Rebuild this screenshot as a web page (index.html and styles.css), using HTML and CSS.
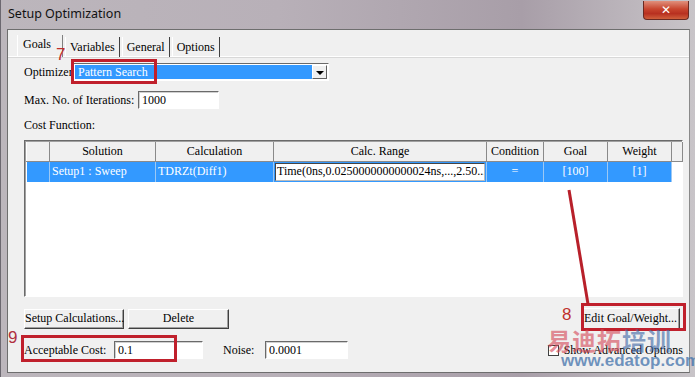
FILE: index.html
```html
<!DOCTYPE html>
<html lang="en">
<head>
    <meta charset="UTF-8">
    <title>Setup Optimization</title>
    <link rel="stylesheet" href="styles.css">
</head>
<body>

    <div class="window">
        <!-- Title bar -->
        <div class="titlebar">
            <span class="title">Setup Optimization</span>
            <div class="close-btn">&#x2715;</div>
        </div>

        <div class="frame">
            <div class="panel">
                <!-- Tabs -->
                <div class="tabs">
                    <div class="tab active">Goals</div>
                    <div class="tab">Variables</div>
                    <div class="tab">General</div>
                    <div class="tab">Options</div>
                </div>

                <div class="page">
                    <div class="row optimizer-row">
                        <label class="lbl-opt">Optimizer</label>
                        <div class="combo">
                            <div class="combo-value">Pattern Search</div>
                            <div class="combo-arrow"></div>
                        </div>
                    </div>

                    <div class="row iter-row">
                        <label class="lbl-iter">Max. No. of Iterations:</label>
                        <div class="input iter-input">1000</div>
                    </div>

                    <div class="section-label">Cost Function:</div>

                    <!-- Cost function grid -->
                    <div class="grid">
                        <table>
                            <colgroup>
                                <col style="width:23px">
                                <col style="width:106px">
                                <col style="width:118px">
                                <col style="width:213px">
                                <col style="width:57px">
                                <col style="width:64px">
                                <col style="width:64px">
                                <col>
                            </colgroup>
                            <tr class="head">
                                <th></th>
                                <th>Solution</th>
                                <th>Calculation</th>
                                <th>Calc. Range</th>
                                <th>Condition</th>
                                <th>Goal</th>
                                <th>Weight</th>
                                <th></th>
                            </tr>
                            <tr class="sel">
                                <td></td>
                                <td class="left">Setup1 : Sweep</td>
                                <td class="left">TDRZt(Diff1)</td>
                                <td class="edit-cell"><div class="cell-edit">Time(0ns,0.0250000000000024ns,...,2.50...</div></td>
                                <td>=</td>
                                <td>[100]</td>
                                <td>[1]</td>
                                <td class="blank"></td>
                            </tr>
                        </table>
                    </div>

                    <div class="row btn-row">
                        <div class="btn btn-setup">Setup Calculations...</div>
                        <div class="btn btn-delete">Delete</div>
                        <div class="btn btn-edit">Edit Goal/Weight...</div>
                    </div>

                    <div class="row cost-row">
                        <label class="lbl-cost">Acceptable Cost:</label>
                        <div class="input cost-input">0.1</div>
                        <label class="lbl-noise">Noise:</label>
                        <div class="input noise-input">0.0001</div>
                        <div class="check">
                            <span class="box"></span>
                            <span>Show Advanced Options</span>
                        </div>
                    </div>
                </div>
            </div>
        </div>

        <!-- Red annotations drawn over the screenshot -->
        <div class="mark mark-7"></div>
        <div class="num num-7">7</div>
        <div class="mark mark-8"></div>
        <div class="num num-8">8</div>
        <div class="mark mark-9"></div>
        <div class="num num-9">9</div>
        <svg class="arrow-line" width="695" height="377">
            <line x1="568" y1="190" x2="587" y2="304" stroke="#b8202a" stroke-width="3"/>
        </svg>

        <!-- Watermark -->
        <div class="watermark">
            <div class="wm-cn"><span class="wm-red">易迪拓</span><span class="wm-blue">培训</span></div>
            <div class="wm-url">www.edatop.com</div>
        </div>
    </div>

</body>
</html>
```

FILE: styles.css
```css
/* Reset */
* {
    margin: 0;
    padding: 0;
    box-sizing: border-box;
}

body {
    width: 695px;
    height: 377px;
    overflow: hidden;
    background: #d8d4d8;
    font-family: 'Liberation Serif', 'Times New Roman', serif;
    font-size: 12px;
    color: #000;
}

.window {
    position: relative;
    width: 695px;
    height: 377px;
    background: linear-gradient(90deg, #bcb6bc 0%, #b8b0b8 40%, #a89ea8 75%, #c8c4c8 100%);
    border-left: 1px solid #6c6870;
}

/* Title bar */
.titlebar {
    height: 29px;
    display: flex;
    align-items: center;
    padding: 0 5px 2px 7px;
    position: relative;
}

.title {
    font-family: 'Noto Sans', sans-serif;
    font-size: 12.5px;
    color: #111;
}

.close-btn {
    position: absolute;
    top: 1px;
    right: 6px;
    width: 46px;
    height: 19px;
    background: linear-gradient(180deg, #e0907c 0%, #c8452e 45%, #b83020 70%, #d0603c 100%);
    border: 1px solid #6a2a22;
    border-top: none;
    border-radius: 0 0 4px 4px;
    color: #fff;
    font-family: 'DejaVu Sans', sans-serif;
    font-size: 12px;
    font-weight: bold;
    text-align: center;
    line-height: 18px;
}

/* Frame around the tab panel */
.frame {
    padding: 0 5px 4px 6px;
}

.panel {
    height: 344px;
    background: #f0f0f0;
    border: 1px solid #6e6e6e;
    border-right-color: #8a8a8a;
    padding-top: 6px;
}

/* Tabs */
.tabs {
    display: flex;
    height: 21px;
    padding-left: 9px;
    border-bottom: 1px solid #fff;
    box-shadow: 0 1px 0 #d8d8d8;
}

.tab {
    padding: 3px 4px 0 4px;
    border-right: 1px solid #404040;
    border-left: 1px solid #fff;
    margin-right: 2px;
    height: 20px;
    margin-top: 1px;
    white-space: nowrap;
}

.tab.active {
    padding: 2px 11px 0 5px;
    margin-top: -1px;
    border-left: 1px solid #fff;
    border-right: 1px solid #808080;
    height: 22px;
}

.page {
    padding: 6px 6px 0 16px;
}

.row {
    display: flex;
    align-items: center;
    white-space: nowrap;
}

/* Inputs */
.input {
    height: 18px;
    background: #fff;
    border: 1px solid #fff;
    border-top-color: #6a6a6a;
    border-left-color: #6a6a6a;
    box-shadow: inset 1px 1px 0 #d0d0d0;
    padding: 1px 3px;
    line-height: 15px;
}

.optimizer-row {
    height: 18px;
}

.lbl-opt {
    width: 49px;
}

.combo {
    width: 256px;
    height: 18px;
    display: flex;
    border: 1px solid #fff;
    border-top-color: #6a6a6a;
    border-left-color: #6a6a6a;
    background: #fff;
    padding: 1px;
}

.combo-value {
    flex: 1;
    background: #3399ff;
    color: #fff;
    padding-left: 3px;
    line-height: 14px;
}

.combo-arrow {
    width: 15px;
    background: #f0f0f0;
    border: 1px solid #fff;
    border-right-color: #606060;
    border-bottom-color: #606060;
    position: relative;
}

.combo-arrow::after {
    content: "";
    position: absolute;
    left: 3px;
    top: 5px;
    border-left: 4px solid transparent;
    border-right: 4px solid transparent;
    border-top: 4px solid #000;
}

.iter-row {
    margin-top: 10px;
    height: 18px;
}

.lbl-iter {
    width: 114px;
}

.iter-input {
    width: 81px;
}

.section-label {
    margin-top: 9px;
    height: 14px;
    line-height: 14px;
}

/* Cost function grid */
.grid {
    margin-top: 8px;
    width: 659px;
    height: 157px;
    background: #fff;
    border: 1px solid #fff;
    border-top-color: #6a6a6a;
    border-left-color: #6a6a6a;
    box-shadow: inset 1px 1px 0 #a0a0a0;
    padding: 1px 0 0 1px;
}

table {
    border-collapse: collapse;
    table-layout: fixed;
    width: 657px;
    font-size: 12px;
}

.head th {
    height: 19px;
    font-weight: normal;
    background: #f0f0f0;
    border-right: 1px solid #8a8a8a;
    border-bottom: 1px solid #8a8a8a;
    border-left: 1px solid #fff;
    text-align: center;
}

.sel td {
    height: 20px;
    background: #3399ff;
    color: #fff;
    text-align: center;
    border-right: 1px solid #9cc8f4;
}

.sel td.left {
    text-align: left;
    padding-left: 2px;
}

.sel td.blank {
    background: #fff;
    border: none;
}

.sel td.edit-cell {
    padding: 1px;
}

.cell-edit {
    background: #fff;
    color: #000;
    text-align: left;
    border: 1px solid #444;
    border-right-color: #bbb;
    border-bottom-color: #bbb;
    height: 18px;
    line-height: 15px;
    padding-left: 1px;
    white-space: nowrap;
    overflow: hidden;
}

/* Buttons */
.btn-row {
    margin-top: 11px;
    height: 22px;
}

.btn {
    height: 20px;
    line-height: 17px;
    text-align: center;
    white-space: nowrap;
    background: #f0f0f0;
    border: 1px solid #fff;
    border-right-color: #404040;
    border-bottom-color: #404040;
    box-shadow: inset -1px -1px 0 #a0a0a0;
}

.btn-setup {
    width: 100px;
}

.btn-delete {
    width: 101px;
    margin-left: 4px;
}

.btn-edit {
    width: 99px;
    height: 22px;
    margin-left: auto;
    margin-right: 3px;
    line-height: 19px;
}

.cost-row {
    margin-top: 11px;
    height: 18px;
}

.lbl-cost {
    width: 90px;
}

.cost-input {
    width: 89px;
}

.lbl-noise {
    margin-left: 20px;
    width: 42px;
}

.noise-input {
    width: 83px;
}

.check {
    margin-left: auto;
    margin-right: 0;
    display: flex;
    align-items: center;
    gap: 5px;
}

.box {
    width: 11px;
    height: 11px;
    background: #fff;
    border: 1px solid #404040;
}

/* Annotations */
.mark {
    position: absolute;
    border: 3px solid #c0202c;
}

.mark-7 {
    left: 70px;
    top: 59px;
    width: 86px;
    height: 25px;
}

.mark-8 {
    left: 580px;
    top: 303px;
    width: 105px;
    height: 28px;
}

.mark-9 {
    left: 20px;
    top: 335px;
    width: 156px;
    height: 27px;
}

.num {
    position: absolute;
    font-family: 'Liberation Sans', sans-serif;
    font-size: 17px;
    color: #c0302c;
}

.num-7 { left: 55px; top: 45px; }
.num-8 { left: 561px; top: 305px; }
.num-9 { left: 7px; top: 328px; color: #b03040; }

.arrow-line {
    position: absolute;
    left: 0;
    top: 0;
    pointer-events: none;
}

/* Watermark */
.watermark {
    position: absolute;
    left: 546px;
    top: 328px;
    width: 148px;
    opacity: 0.85;
    font-family: 'Noto Sans CJK SC', sans-serif;
    font-weight: bold;
    line-height: 1;
    white-space: nowrap;
}

.wm-cn {
    font-size: 24px;
    letter-spacing: 1px;
}

.wm-red {
    color: rgba(215, 80, 95, 0.75);
}

.wm-blue {
    color: rgba(70, 110, 170, 0.75);
}

.wm-url {
    font-family: 'Liberation Sans', sans-serif;
    font-size: 17px;
    color: rgba(60, 110, 170, 0.85);
    margin: 0 0 0 14px;
}
```
